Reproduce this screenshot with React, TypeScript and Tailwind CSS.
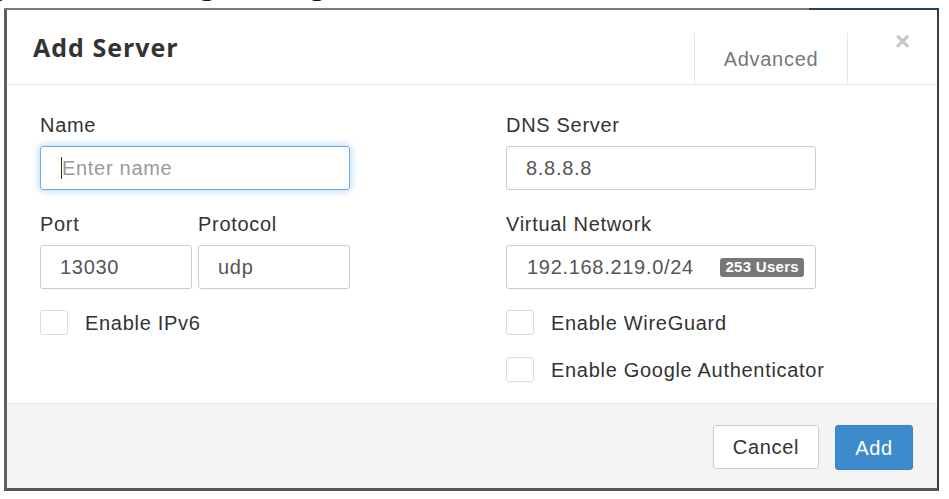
import React from "react";

const body = { fontFamily: '"Liberation Sans", Arial, sans-serif' };
const heading = { fontFamily: '"Open Sans", "Noto Sans", sans-serif' };

function Label({ children }: { children: React.ReactNode }) {
  return (
    <label className="block text-[20px] leading-[24px] tracking-[0.7px] text-[#333] mb-[9px]">
      {children}
    </label>
  );
}

function Field({ value, className = "" }: { value: string; className?: string }) {
  return (
    <input
      readOnly
      value={value}
      className={`h-[44px] px-[19px] border border-[#ccc] rounded-[3px] bg-white text-[20px] tracking-[0.7px] text-[#555] outline-none ${className}`}
    />
  );
}

function Check({ label }: { label: string }) {
  return (
    <label className="flex items-center gap-[17px] h-[25px]">
      <span className="w-[28px] h-[25px] border border-[#ddd] rounded-[3px] bg-white" />
      <span className="text-[20px] tracking-[0.7px] text-[#333]">{label}</span>
    </label>
  );
}

export default function App() {
  return (
    <div className="w-[949px] h-[499px] bg-white overflow-hidden" style={body}>
      {/* page heading behind the modal, mostly cut off */}
      <div className="h-[8px] overflow-hidden">
        <div
          className="-mt-[31px] -ml-[4px] text-[28px] leading-[28px] font-bold text-[#111] whitespace-nowrap"
          style={heading}
        >
          y Server Settings Config
        </div>
      </div>

      <div className="ml-[4px] w-[935px]">
        <div className="flex h-[2px]">
          <div className="flex-1 bg-[#7a7a7a]" />
          <div className="w-[130px] bg-[#24405f]" />
        </div>

        <div className="h-[481px] flex flex-col bg-white border-l-[3px] border-r-2 border-b-[3px] border-l-[#5e5e5e] border-r-[#3c3c3c] border-b-[#575757]">
          {/* header */}
          <div className="h-[75px] flex border-b border-[#e5e5e5]">
            <div className="flex-1 flex items-center pl-[26px] pt-[1px]">
              <h4
                className="text-[25px] font-bold tracking-[1px] text-[#333]"
                style={heading}
              >
                Add Server
              </h4>
            </div>
            <button className="mt-[23px] w-[154px] flex items-center justify-center border-x border-[#e5e5e5] text-[20px] tracking-[0.7px] text-[#777]">
              Advanced
            </button>
            <div className="w-[89px] pl-[47px] pt-[18px]">
              <span className="text-[26px] leading-[26px] font-bold text-[#c4c4c4]">×</span>
            </div>
          </div>

          {/* body */}
          <div className="flex-1 grid grid-cols-[466px_1fr] pl-[33px] pt-[28px]">
            <div>
              <Label>Name</Label>
              <div className="w-[310px] h-[44px] flex items-center pl-[20px] border border-[#66afe9] rounded-[3px] shadow-[0_0_8px_rgba(102,175,233,0.6)]">
                <span className="w-[1px] h-[22px] bg-[#333]" />
                <span className="text-[20px] tracking-[0.7px] text-[#999]">Enter name</span>
              </div>

              <div className="mt-[22px] flex gap-[6px]">
                <div className="w-[152px]">
                  <Label>Port</Label>
                  <Field value="13030" className="w-[152px]" />
                </div>
                <div className="w-[152px]">
                  <Label>Protocol</Label>
                  <Field value="udp" className="w-[152px]" />
                </div>
              </div>

              <div className="mt-[21px]">
                <Check label="Enable IPv6" />
              </div>
            </div>

            <div>
              <Label>DNS Server</Label>
              <Field value="8.8.8.8" className="w-[310px]" />

              <div className="mt-[22px]">
                <Label>Virtual Network</Label>
                <div className="w-[310px] h-[44px] flex items-center justify-between pl-[20px] pr-[11px] border border-[#ccc] rounded-[3px]">
                  <span className="text-[20px] tracking-[0.7px] text-[#555]">192.168.219.0/24</span>
                  <span className="h-[19px] px-[5px] flex items-center rounded-[3px] bg-[#777] text-white text-[15px] font-bold tracking-[0.3px]">
                    253 Users
                  </span>
                </div>
              </div>

              <div className="mt-[21px] flex flex-col gap-[22px]">
                <Check label="Enable WireGuard" />
                <Check label="Enable Google Authenticator" />
              </div>
            </div>
          </div>

          {/* footer */}
          <div className="h-[85px] flex justify-end items-start gap-[16px] pt-[21px] pr-[24px] bg-[#f4f4f4] border-t border-[#e8e8e8]">
            <button className="h-[44px] w-[106px] bg-white border border-[#ccc] rounded-[3px] text-[20px] tracking-[0.7px] text-[#333]">
              Cancel
            </button>
            <button className="h-[45px] w-[78px] bg-[#3d8bcd] border border-[#3a84c2] rounded-[3px] text-[20px] tracking-[0.7px] text-white">
              Add
            </button>
          </div>
        </div>
      </div>
    </div>
  );
}
